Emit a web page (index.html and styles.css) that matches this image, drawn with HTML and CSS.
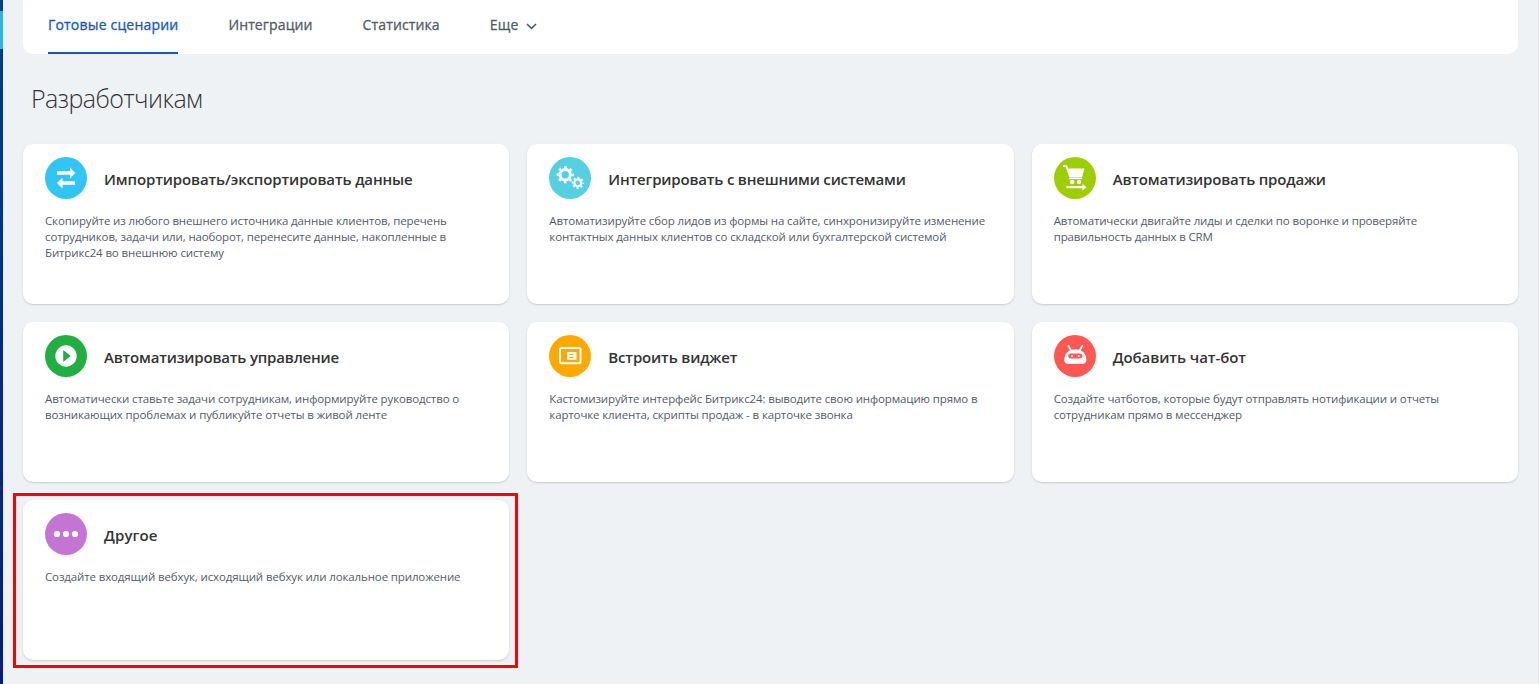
FILE: index.html
```html
<!DOCTYPE html>
<html lang="ru">
<head>
<meta charset="utf-8">
<title>Разработчикам</title>
<link rel="stylesheet" href="styles.css">
</head>
<body>
<div class="rail"><span class="rail-mark"></span></div>
<main class="page">
  <nav class="tabs">
    <a class="tab tab-active">Готовые сценарии</a>
    <a class="tab">Интеграции</a>
    <a class="tab">Статистика</a>
    <a class="tab tab-more">Еще <svg class="chevron" width="11" height="7" viewBox="0 0 11 7"><path d="M1 1l4.5 4.4L10 1" fill="none" stroke="#525c69" stroke-width="1.6"/></svg></a>
  </nav>
  <h1 class="title">Разработчикам</h1>
  <section class="grid">
    <article class="card">
      <header class="card-head">
        <svg class="icon" viewBox="0 0 42 42"><circle cx="21" cy="21" r="21" fill="#2fc6f6"/><path fill="#fff" d="M12 14.3h13v-4L30.3 16 25 21.3v-3.600H12zM30 24.300H17.500v-3.600L11.800 26l5.700 5.400v-3.700H30z"/></svg>
        <h2 class="card-title t1">Импортировать/экспортировать данные</h2>
      </header>
      <p class="text">Скопируйте из любого внешнего источника данные клиентов, перечень<br>сотрудников, задачи или, наоборот, перенесите данные, накопленные в<br>Битрикс24 во внешнюю систему</p>
    </article>
    <article class="card">
      <header class="card-head">
        <svg class="icon" viewBox="0 0 42 42"><circle cx="21" cy="21" r="21" fill="#55d0e0"/>
          <g fill="none" stroke="#fff"><circle cx="16.2" cy="17.8" r="5.2" stroke-width="3"/><circle cx="16.2" cy="17.8" r="7.500" stroke-width="2.2" stroke-dasharray="2.800 3.090" stroke-dashoffset="1.4"/><circle cx="28.8" cy="25.800" r="3.5" stroke-width="2.2"/><circle cx="28.8" cy="25.800" r="5.300" stroke-width="1.600" stroke-dasharray="2 2.163" stroke-dashoffset="1"/></g></svg>
        <h2 class="card-title t2">Интегрировать с внешними системами</h2>
      </header>
      <p class="text">Автоматизируйте сбор лидов из формы на сайте, синхронизируйте изменение<br>контактных данных клиентов со складской или бухгалтерской системой</p>
    </article>
    <article class="card">
      <header class="card-head">
        <svg class="icon" viewBox="0 0 42 42"><circle cx="21" cy="21" r="21" fill="#9dcf00"/><g fill="#fff"><path d="M9 8.300h4l1.200 3.300h16.200L28 20.500H15.400L11.800 10H9z"/><circle cx="18.200" cy="25" r="2.200"/><circle cx="25" cy="25" r="2.200"/><path d="M12.300 29h16.200v-2l4.200 3.300-4.200 3.300v-2.300H12.300z"/></g><path d="M15 21.500h13" stroke="#fff" stroke-width="1.200"/></svg>
        <h2 class="card-title t3">Автоматизировать продажи</h2>
      </header>
      <p class="text">Автоматически двигайте лиды и сделки по воронке и проверяйте<br>правильность данных в CRM</p>
    </article>
    <article class="card">
      <header class="card-head">
        <svg class="icon" viewBox="0 0 42 42"><circle cx="21" cy="21" r="21" fill="#20b040"/><circle cx="21" cy="21" r="10.7" fill="#fff"/><path d="M18.200 15.900v10.200q0 .600.600.300l6.300-4.800q.700-.600 0-1.200l-6.300-4.800q-.600-.400-.600.300z" fill="#20b040"/></svg>
        <h2 class="card-title t4">Автоматизировать управление</h2>
      </header>
      <p class="text">Автоматически ставьте задачи сотрудникам, информируйте руководство о<br>возникающих проблемах и публикуйте отчеты в живой ленте</p>
    </article>
    <article class="card">
      <header class="card-head">
        <svg class="icon" viewBox="0 0 42 42"><circle cx="21" cy="21" r="21" fill="#ffa900"/><rect x="11" y="13" width="20.500" height="15.2" rx="1.6" fill="none" stroke="#fff" stroke-width="2"/><rect x="18" y="17" width="9.500" height="7.800" rx=".5" fill="#fff"/><path d="M20.300 19.500h4.200M20.300 22.300h4.200" stroke="#ffa900" stroke-width="1.2"/></svg>
        <h2 class="card-title t5">Встроить виджет</h2>
      </header>
      <p class="text">Кастомизируйте интерфейс Битрикс24: выводите свою информацию прямо в<br>карточке клиента, скрипты продаж - в карточке звонка</p>
    </article>
    <article class="card">
      <header class="card-head">
        <svg class="icon" viewBox="0 0 42 42"><circle cx="21" cy="21" r="21" fill="#ff5752"/><path d="M14.3 10.8l3 5M28.4 10.8l-3 5" stroke="#fff" stroke-width="1.8" stroke-linecap="round"/><path fill="#fff" d="M10.200 25.200c0-6.500 4.300-11 11.100-11s11.100 4.500 11.100 11c0 2.600-2.200 3.700-4.900 3.700H15.200c-2.700 0-5-1.100-5-3.700z"/><rect x="14.200" y="18.600" width="14.200" height="4.800" rx="2.400" fill="#ff5752"/><circle cx="18" cy="21" r="1.100" fill="#fff"/><circle cx="24.700" cy="21" r="1.100" fill="#fff"/></svg>
        <h2 class="card-title t6">Добавить чат-бот</h2>
      </header>
      <p class="text">Создайте чатботов, которые будут отправлять нотификации и отчеты<br>сотрудникам прямо в мессенджер</p>
    </article>
    <article class="card card-marked">
      <header class="card-head">
        <svg class="icon" viewBox="0 0 42 42"><circle cx="21" cy="21" r="21" fill="#c474d2"/><g fill="#fff"><circle cx="12" cy="21" r="3.1"/><circle cx="21" cy="21" r="3.1"/><circle cx="30" cy="21" r="3.1"/></g></svg>
        <h2 class="card-title t7">Другое</h2>
      </header>
      <p class="text">Создайте входящий вебхук, исходящий вебхук или локальное приложение</p>
    </article>
  </section>
</main>
</body>
</html>
```
FILE: styles.css
```css
* { box-sizing: border-box; }
body {
  margin: 0;
  height: 684px;
  display: flex;
  overflow: hidden;
  background: #eef2f4;
  font-family: "Open Sans", "Noto Sans", sans-serif;
}
.rail {
  width: 3px;
  flex: none;
  padding-top: 11px;
  background: linear-gradient(#00408c, #001d87);
}
.rail-mark { display: block; height: 38px; background: #2fb2e8; }
.page {
  flex: 1;
  min-width: 0;
  padding: 0 20px;
  border-right: 1px solid #dce4e8;
}
.tabs {
  display: flex;
  gap: 50px;
  height: 54px;
  padding: 0 25px;
  background: #fff;
  border-radius: 0 0 10px 10px;
}
.tab {
  height: 54px;
  padding-top: 14px;
  font-size: 14px;
  line-height: 21px;
  letter-spacing: .13px;
  -webkit-text-stroke: .3px currentColor;
  color: #525c69;
  white-space: nowrap;
}
.tab-active {
  letter-spacing: .19px;
  color: #1058d0;
  border-bottom: 2px solid #1058d0;
}
.chevron { margin-left: 4px; }
.title {
  margin: 26px 0 0 8px;
  height: 64px;
  font-size: 25px;
  line-height: 36px;
  font-weight: 300;
  letter-spacing: -.55px;
  color: #333;
}
.grid {
  display: grid;
  grid-template-columns: repeat(3, minmax(0, 1fr));
  grid-auto-rows: 160px;
  gap: 18px;
}
.card {
  padding: 13px 22px;
  background: #fff;
  border-radius: 10px;
  box-shadow: 0 1px 2px rgba(0, 0, 0, .16);
}
.card-marked { position: relative; }
.card-marked::after {
  content: "";
  position: absolute;
  inset: -7px -9px -8px -10px;
  border: 3px solid #f00;
}
.card-head { display: flex; gap: 17px; height: 42px; }
.icon { width: 42px; height: 42px; flex: none; }
.card-title {
  margin: 11px 0 0;
  font-size: 15px;
  line-height: 22px;
  font-weight: 600;
  color: #333;
  white-space: nowrap;
}
.t1 { letter-spacing: -.12px; }
.t2 { letter-spacing: -.18px; }
.t3 { letter-spacing: -.17px; }
.t4 { letter-spacing: -.18px; }
.t5 { letter-spacing: -.15px; }
.t6 { letter-spacing: -.06px; }
.t7 { letter-spacing: .12px; }
.text {
  margin: 14px 0 0;
  font-size: 11.5px;
  line-height: 16px;
  letter-spacing: -.13px;
  color: #525c69;
  white-space: nowrap;
}
```
